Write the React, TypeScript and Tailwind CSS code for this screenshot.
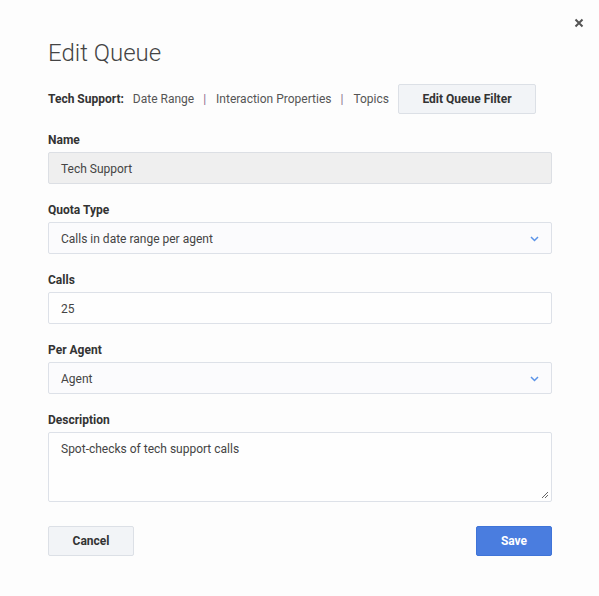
const FIELDS_FONT = { fontFamily: "Roboto, 'Liberation Sans', sans-serif" };

function Chevron() {
  return (
    <svg width="9" height="6" viewBox="0 0 9 6" className="shrink-0">
      <path d="M1 1l3.5 3.5L8 1" fill="none" stroke="#5b93e8" strokeWidth="1.5" />
    </svg>
  );
}

function Label({ children }: { children: React.ReactNode }) {
  return <div className="mb-[3px] h-[18px] text-[12px] leading-[18px] font-bold text-[#333]">{children}</div>;
}

export default function App() {
  return (
    <div style={FIELDS_FONT} className="relative h-[596px] w-[599px] bg-[#fdfdfd] text-[#444]">
      <button className="absolute right-[15px] top-[18px] text-[#555]">
        <svg width="10" height="10" viewBox="0 0 10 10">
          <path d="M1.5 1.5l7 7M8.5 1.5l-7 7" stroke="#555" strokeWidth="2" />
        </svg>
      </button>

      <div className="pl-[48px] pr-[47px] pt-[37px]">
        <h1 className="text-[24px] font-light leading-[32px] text-[#444]">Edit Queue</h1>

        <div className="mt-[15px] flex h-[30px] items-center text-[12px] text-[#555]">
          <span className="font-bold text-[#333]">Tech Support:</span>
          <span className="ml-[9px]">Date Range</span>
          <span className="ml-[9px] mr-[10px] text-[#8a6a8f]">|</span>
          <span>Interaction Properties</span>
          <span className="ml-[9px] mr-[10px] text-[#8a6a8f]">|</span>
          <span>Topics</span>
          <button className="ml-[9px] h-[30px] w-[138px] rounded-[2px] border border-[#dce0e6] bg-[#f2f4f7] text-[12px] font-bold text-[#333]">
            Edit Queue Filter
          </button>
        </div>

        <div className="mt-[17px]">
          <Label>Name</Label>
          <div className="flex h-[32px] items-center rounded-[2px] border border-[#dcdfe4] bg-[#efefef] px-[12px] pt-[1px] text-[12px] text-[#444]">
            Tech Support
          </div>
        </div>

        <div className="mt-[17px]">
          <Label>Quota Type</Label>
          <div className="flex h-[32px] items-center justify-between rounded-[2px] border border-[#dde1e8] bg-[#fbfbfd] pl-[12px] pr-[12px] pt-[1px] text-[12px] text-[#444]">
            <span>Calls in date range per agent</span>
            <Chevron />
          </div>
        </div>

        <div className="mt-[17px]">
          <Label>Calls</Label>
          <div className="flex h-[32px] items-center rounded-[2px] border border-[#dde1e8] bg-[#fefefe] px-[12px] pt-[1px] text-[12px] text-[#444]">
            25
          </div>
        </div>

        <div className="mt-[17px]">
          <Label>Per Agent</Label>
          <div className="flex h-[32px] items-center justify-between rounded-[2px] border border-[#dde1e8] bg-[#fbfbfd] pl-[12px] pr-[12px] pt-[1px] text-[12px] text-[#444]">
            <span>Agent</span>
            <Chevron />
          </div>
        </div>

        <div className="mt-[17px]">
          <Label>Description</Label>
          <div className="relative h-[70px] rounded-[2px] border border-[#dde1e8] bg-[#fefefe] px-[12px] pt-[7px] text-[12px] text-[#444]">
            Spot-checks of tech support calls
            <svg width="8" height="8" viewBox="0 0 8 8" className="absolute bottom-[2px] right-[2px]">
              <path d="M7 1L1 7M7 4L4 7" stroke="#666" strokeWidth="1" />
            </svg>
          </div>
        </div>

        <div className="mt-[24px] flex justify-between">
          <button className="h-[30px] w-[86px] rounded-[2px] border border-[#dce0e6] bg-[#f2f4f7] text-[12px] font-bold text-[#333]">
            Cancel
          </button>
          <button className="h-[30px] w-[76px] rounded-[2px] border border-[#3f74d8] bg-[#4a7ddf] text-[12px] font-bold text-white">
            Save
          </button>
        </div>
      </div>
    </div>
  );
}
